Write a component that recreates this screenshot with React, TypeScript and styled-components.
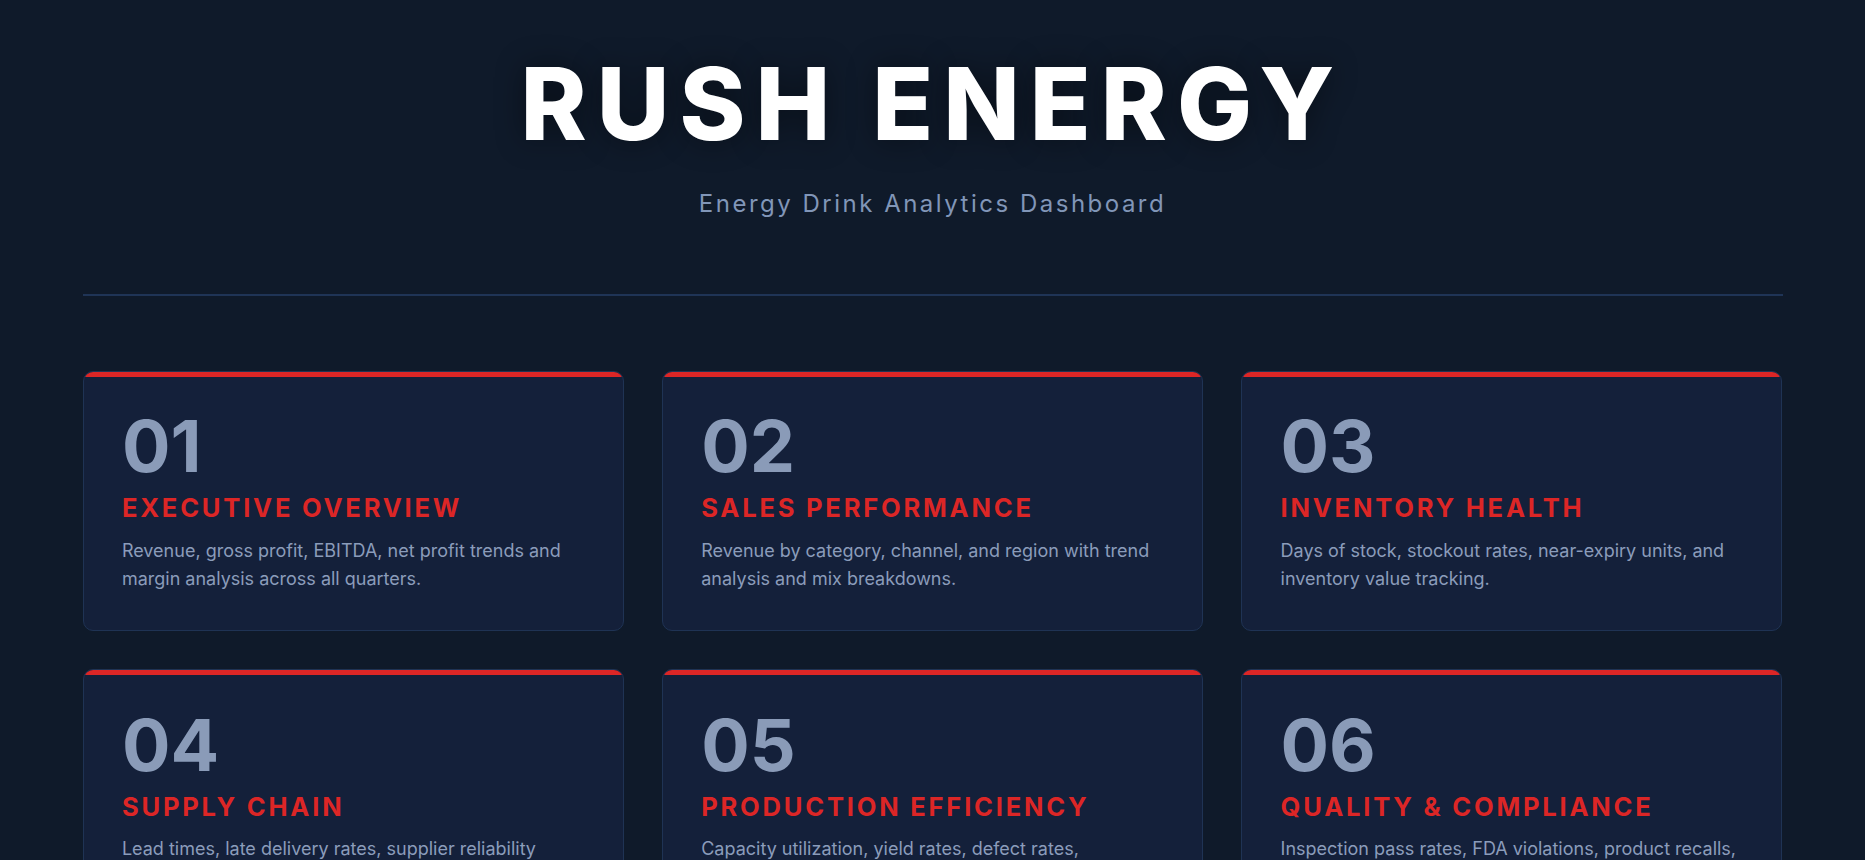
import React from 'react';
import styled, { createGlobalStyle } from 'styled-components';

const GlobalStyle = createGlobalStyle`
  * {
    box-sizing: border-box;
  }

  body {
    margin: 0;
    background-color: #0f1a2a;
    font-family: Inter, "Noto Sans", "Liberation Sans", sans-serif;
    -webkit-font-smoothing: antialiased;
  }
`;

const Page = styled.div`
  min-height: 100vh;
  background-color: #0f1a2a;
`;

const Container = styled.div`
  max-width: 1700px;
  margin: 0 auto;
  padding-bottom: 80px;
`;

const Header = styled.header`
  padding: 49px 0 72px;
  border-bottom: 2px solid #1f3456;
  text-align: center;
`;

const Title = styled.h1`
  margin: 0;
  font-size: 100px;
  font-weight: 800;
  line-height: 1.1;
  letter-spacing: 10px;
  color: #ffffff;
  text-shadow: 0 0 30px rgba(0, 0, 0, 0.45);
`;

const Subtitle = styled.p`
  margin: 27px 0 0;
  font-size: 24px;
  font-weight: 400;
  line-height: 1.5;
  letter-spacing: 2.5px;
  color: #8196b8;
`;

const Grid = styled.section`
  display: grid;
  grid-template-columns: repeat(3, 1fr);
  gap: 38px;
  margin-top: 75px;
`;

const Card = styled.article`
  position: relative;
  overflow: hidden;
  background-color: #14203a;
  border: 1px solid #1f3354;
  border-radius: 10px;
  padding: 38.4px 38.4px 37.4px;
  cursor: pointer;

  &::before {
    content: '';
    position: absolute;
    top: 0;
    left: 0;
    right: 0;
    height: 5px;
    background-color: #dc2626;
  }
`;

const Number = styled.div`
  font-size: 72px;
  font-weight: 700;
  line-height: 1;
  color: #8a9bb8;
`;

const CardTitle = styled.h2`
  margin: 11px 0 0;
  font-size: 25.6px;
  font-weight: 700;
  line-height: 1.2;
  letter-spacing: 2.75px;
  text-transform: uppercase;
  color: #dc2626;
`;

const Description = styled.p`
  margin: 12.5px 0 0;
  font-size: 18px;
  line-height: 1.57;
  color: #8b9cba;
`;

const sections = [
  {
    id: '01',
    title: 'Executive Overview',
    text: 'Revenue, gross profit, EBITDA, net profit trends and margin analysis across all quarters.',
  },
  {
    id: '02',
    title: 'Sales Performance',
    text: 'Revenue by category, channel, and region with trend analysis and mix breakdowns.',
  },
  {
    id: '03',
    title: 'Inventory Health',
    text: 'Days of stock, stockout rates, near-expiry units, and inventory value tracking.',
  },
  {
    id: '04',
    title: 'Supply Chain',
    text: 'Lead times, late delivery rates, supplier reliability scores, and freight cost analysis.',
  },
  {
    id: '05',
    title: 'Production Efficiency',
    text: 'Capacity utilization, yield rates, defect rates, downtime, and cost per unit by line.',
  },
  {
    id: '06',
    title: 'Quality & Compliance',
    text: 'Inspection pass rates, FDA violations, product recalls, and audit outcomes by plant.',
  },
];

const App: React.FC = () => {
  return (
    <Page>
      <GlobalStyle />
      <Container>
        <Header>
          <Title>RUSH ENERGY</Title>
          <Subtitle>Energy Drink Analytics Dashboard</Subtitle>
        </Header>
        <Grid>
          {sections.map((section) => (
            <Card key={section.id}>
              <Number>{section.id}</Number>
              <CardTitle>{section.title}</CardTitle>
              <Description>{section.text}</Description>
            </Card>
          ))}
        </Grid>
      </Container>
    </Page>
  );
};

export default App;
